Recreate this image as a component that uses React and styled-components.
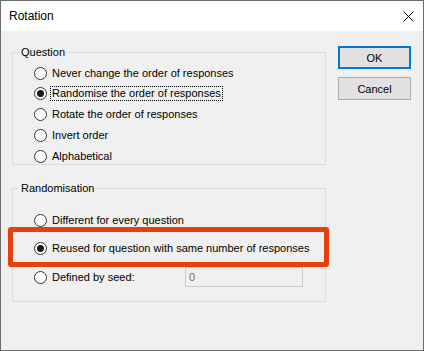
import React from "react";
import styled, { createGlobalStyle } from "styled-components";

const GlobalStyle = createGlobalStyle`
  html, body {
    margin: 0;
    padding: 0;
    background: #ffffff;
  }

  body {
    font-family: "Liberation Sans", Arial, sans-serif;
    color: #000;
  }
`;

const Window = styled.div`
  width: 424px;
  height: 351px;
  box-sizing: border-box;
  border: 1px solid #6b6b6b;
  background: #f0f0f0;
  display: flex;
  flex-direction: column;
`;

const TitleBar = styled.div`
  height: 30px;
  flex: none;
  background: #fff;
  display: flex;
  align-items: center;
  justify-content: space-between;
  padding-left: 8px;
  font-size: 12px;
`;

const CloseButton = styled.div`
  width: 30px;
  height: 30px;
  display: flex;
  align-items: center;
  justify-content: center;
`;

const Body = styled.div`
  display: flex;
  padding: 14px 0 0 11px;
`;

const LeftColumn = styled.div`
  width: 314px;
  display: flex;
  flex-direction: column;
  gap: 16px;
`;

const Group = styled.fieldset`
  margin: 0;
  padding: 0;
  min-width: 0;
  border: 1px solid #dcdcdc;
`;

const Legend = styled.legend`
  margin-left: 6px;
  padding: 0 2px;
  font-size: 11px;
  line-height: 14px;
`;

const Options = styled.div`
  display: flex;
  flex-direction: column;
  gap: ${p => p.$gap}px;
  padding: ${p => p.$top}px 0 ${p => p.$bottom}px 21px;
`;

const Row = styled.label`
  position: relative;
  height: ${p => p.$height}px;
  display: flex;
  align-items: center;
  font-size: 11px;

  ${p => p.$marked && `
    &::before {
      content: "";
      position: absolute;
      left: -26px;
      right: -4px;
      top: -11.5px;
      bottom: -8.5px;
      border: 5px solid #e8400c;
      border-radius: 3px;
    }
  `}
`;

const Radio = styled.span`
  width: 13px;
  height: 13px;
  box-sizing: border-box;
  flex: none;
  border: 1px solid #333;
  border-radius: 50%;
  background: #fff;
  display: flex;
  align-items: center;
  justify-content: center;

  &::after {
    content: "";
    width: 7px;
    height: 7px;
    border-radius: 50%;
    background: ${p => (p.$checked ? "#1a1a1a" : "transparent")};
  }
`;

const Caption = styled.span`
  margin-left: 3px;
  padding: 0 1px;
  line-height: 13px;
  border: 1px ${p => (p.$focused ? "dotted #000" : "solid transparent")};
`;

const SeedInput = styled.div`
  width: 118px;
  height: 20px;
  box-sizing: border-box;
  margin-left: auto;
  margin-right: 22px;
  border: 1px solid #cccccc;
  background: #f0f0f0;
  color: #6d6d6d;
  font-size: 11px;
  padding-left: 3px;
  display: flex;
  align-items: center;
`;

const ButtonColumn = styled.div`
  margin-left: 12px;
  padding-top: 1px;
  display: flex;
  flex-direction: column;
  gap: 8px;
`;

const Button = styled.button`
  width: 73px;
  height: 23px;
  box-sizing: border-box;
  padding: 0;
  background: #e1e1e1;
  border: ${p => (p.$default ? "2px solid #0078d7" : "1px solid #adadad")};
  font-family: "Liberation Sans", Arial, sans-serif;
  font-size: 11px;
  color: #000;
`;

const questionOptions = [
  "Never change the order of responses",
  "Randomise the order of responses",
  "Rotate the order of responses",
  "Invert order",
  "Alphabetical",
];

export default function App() {
  return (
    <>
      <GlobalStyle />
      <Window>
        <TitleBar>
          <span>Rotation</span>
          <CloseButton>
            <svg width="11" height="11" viewBox="0 0 11 11">
              <path d="M0.5 0.5 L10.5 10.5 M10.5 0.5 L0.5 10.5" stroke="#000" strokeWidth="1" />
            </svg>
          </CloseButton>
        </TitleBar>
        <Body>
          <LeftColumn>
            <Group>
              <Legend>Question</Legend>
              <Options $gap={4.75} $top={6} $bottom={0}>
                {questionOptions.map((text, i) => (
                  <Row key={text} $height={16}>
                    <Radio $checked={i === 1} />
                    <Caption $focused={i === 1}>{text}</Caption>
                  </Row>
                ))}
              </Options>
            </Group>
            <Group>
              <Legend>Randomisation</Legend>
              <Options $gap={8.5} $top={15} $bottom={14}>
                <Row $height={20}>
                  <Radio />
                  <Caption>Different for every question</Caption>
                </Row>
                <Row $height={20} $marked>
                  <Radio $checked />
                  <Caption>Reused for question with same number of responses</Caption>
                </Row>
                <Row $height={20}>
                  <Radio />
                  <Caption>Defined by seed:</Caption>
                  <SeedInput>0</SeedInput>
                </Row>
              </Options>
            </Group>
          </LeftColumn>
          <ButtonColumn>
            <Button $default>OK</Button>
            <Button>Cancel</Button>
          </ButtonColumn>
        </Body>
      </Window>
    </>
  );
}
